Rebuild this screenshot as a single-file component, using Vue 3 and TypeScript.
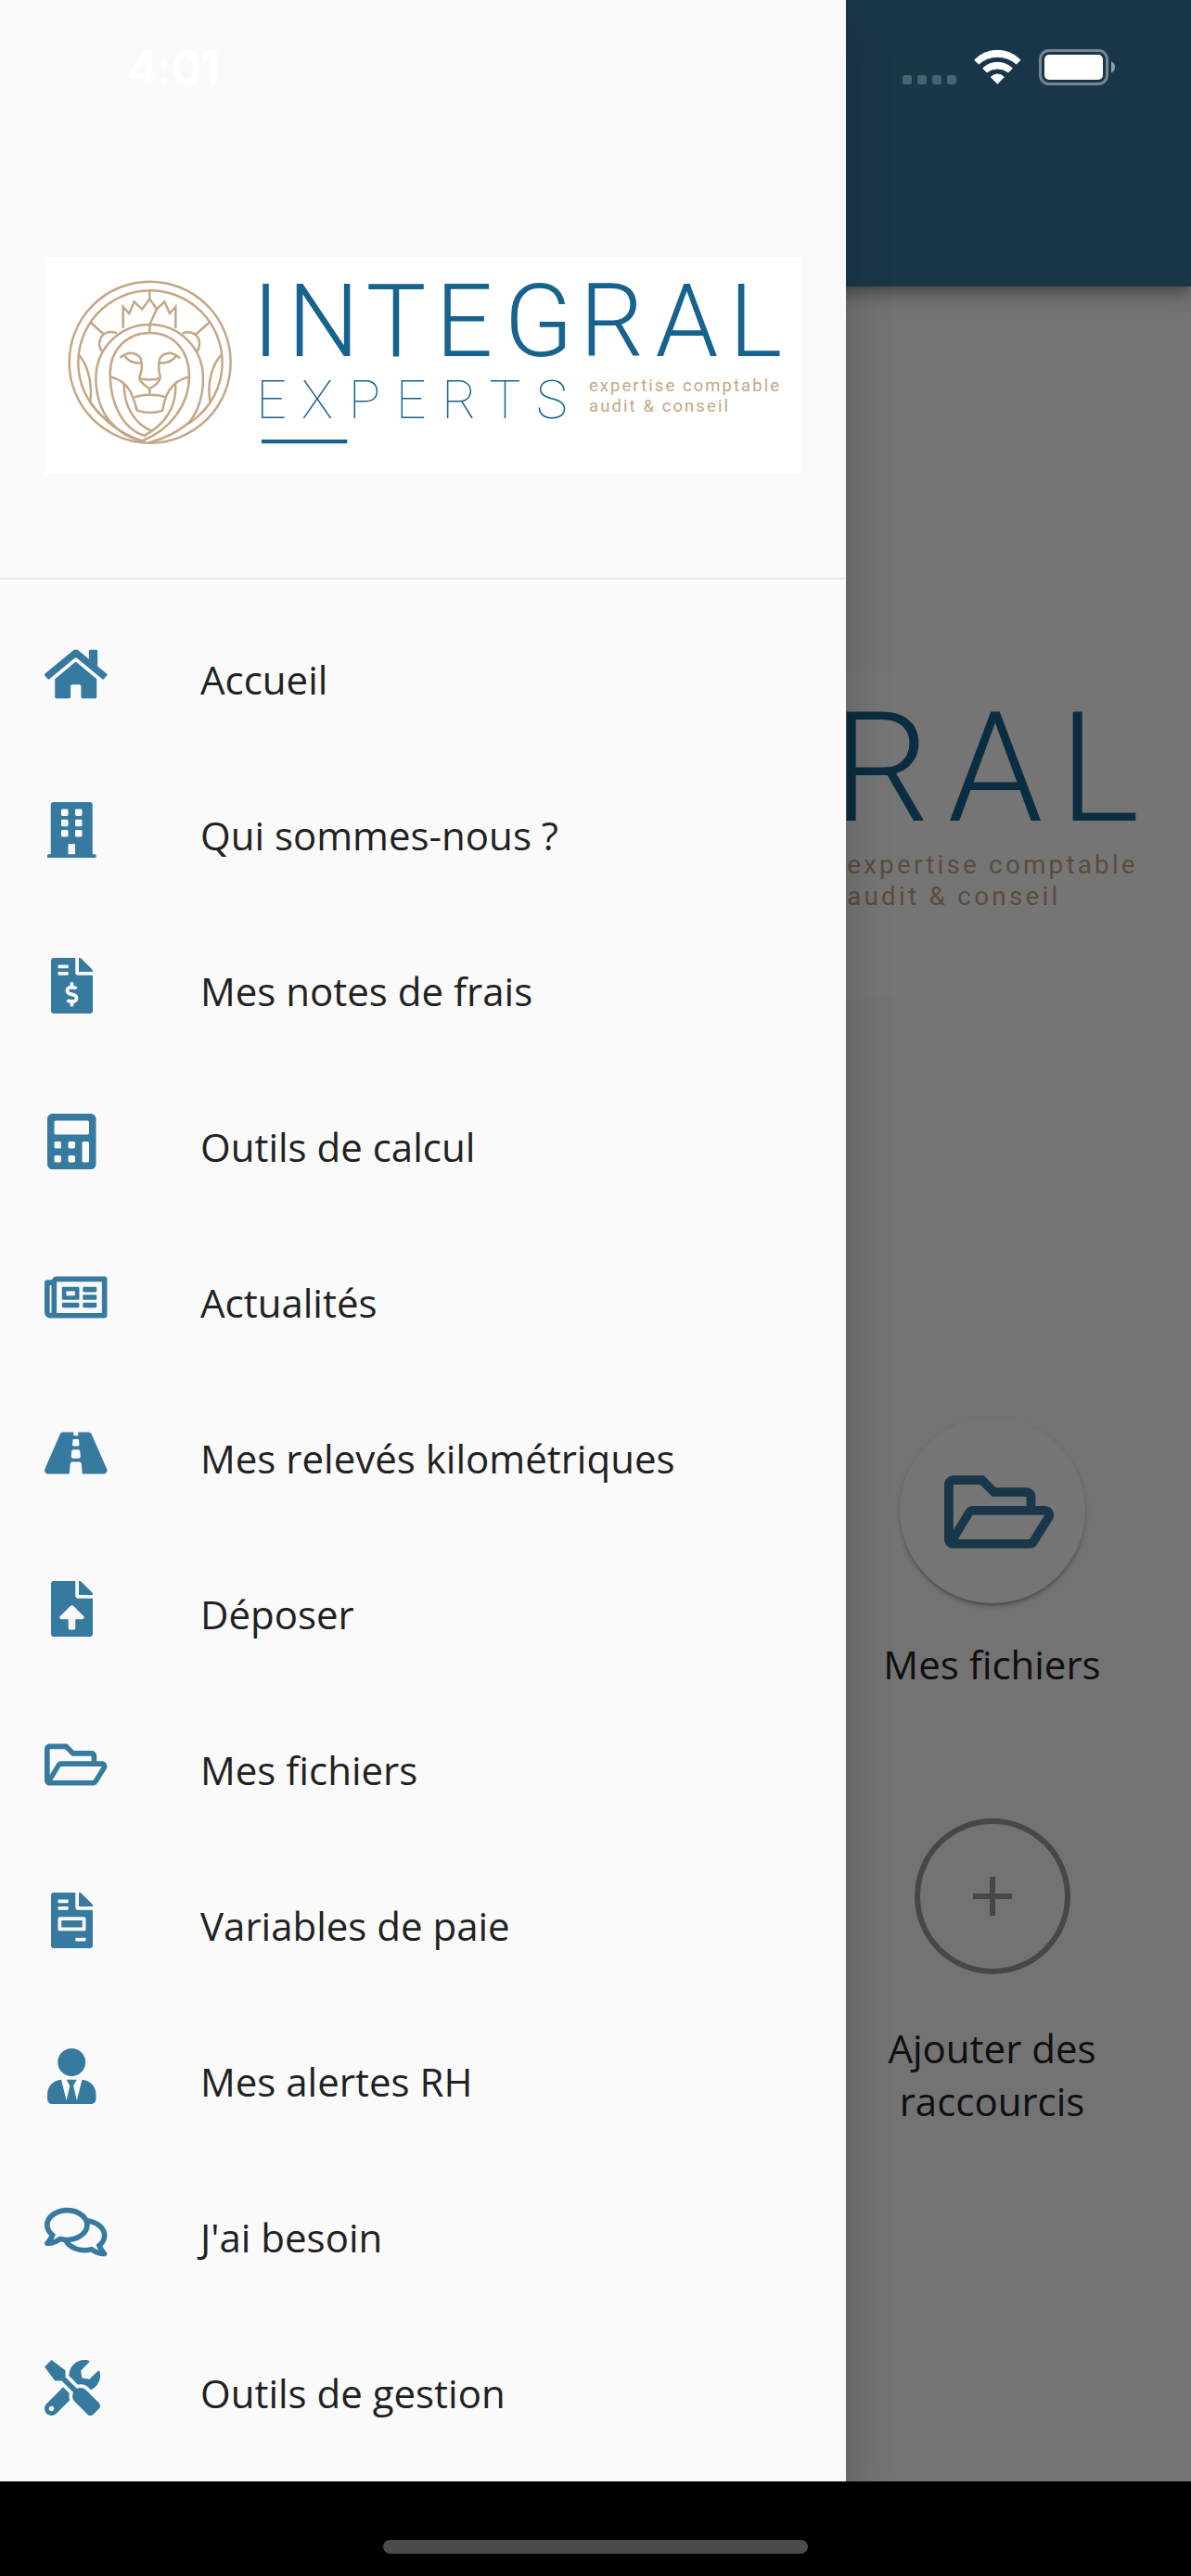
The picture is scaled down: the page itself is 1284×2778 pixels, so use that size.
<script setup lang="ts">
import { defineComponent, h } from 'vue'

interface MenuItem {
  label: string
  width: number
  path: string
}

const folderOpen =
  'M527.9 224H480v-48c0-26.5-21.5-48-48-48H272l-64-64H48C21.5 64 0 85.5 0 112v288c0 26.5 21.5 48 48 48h400c16.5 0 31.9-8.5 40.7-22.6l79.9-128c20-31.9-3-73.4-40.7-73.4zM48 118c0-3.3 2.7-6 6-6h134.1l64 64H426c3.3 0 6 2.7 6 6v42H152c-16.8 0-32.4 8.8-41.1 23.2L48 351.4zm400 282H72l77.2-128H528z'

const items: MenuItem[] = [
  {
    label: 'Accueil',
    width: 576,
    path: 'M280.37 148.26L96 300.11V464a16 16 0 0 0 16 16l112.06-.29a16 16 0 0 0 15.92-16V368a16 16 0 0 1 16-16h64a16 16 0 0 1 16 16v95.64a16 16 0 0 0 16 16.05L464 480a16 16 0 0 0 16-16V300L295.67 148.26a12.19 12.19 0 0 0-15.3 0zM571.6 251.47L488 182.56V44.05a12 12 0 0 0-12-12h-56a12 12 0 0 0-12 12v72.61L318.47 43a48 48 0 0 0-61 0L4.34 251.47a12 12 0 0 0-1.6 16.9l25.5 31A12 12 0 0 0 45.15 301l235.22-193.74a12.19 12.19 0 0 1 15.3 0L530.9 301a12 12 0 0 0 16.9-1.6l25.5-31a12 12 0 0 0-1.7-16.93z',
  },
  {
    label: 'Qui sommes-nous ?',
    width: 448,
    path: 'M436 480h-20V24c0-13.255-10.745-24-24-24H56C42.745 0 32 10.745 32 24v456H12c-6.627 0-12 5.373-12 12v20h448v-20c0-6.627-5.373-12-12-12zM128 76c0-6.627 5.373-12 12-12h40c6.627 0 12 5.373 12 12v40c0 6.627-5.373 12-12 12h-40c-6.627 0-12-5.373-12-12V76zm0 96c0-6.627 5.373-12 12-12h40c6.627 0 12 5.373 12 12v40c0 6.627-5.373 12-12 12h-40c-6.627 0-12-5.373-12-12v-40zm52 148h-40c-6.627 0-12-5.373-12-12v-40c0-6.627 5.373-12 12-12h40c6.627 0 12 5.373 12 12v40c0 6.627-5.373 12-12 12zm76 160h-64v-84c0-6.627 5.373-12 12-12h40c6.627 0 12 5.373 12 12v84zm64-172c0 6.627-5.373 12-12 12h-40c-6.627 0-12-5.373-12-12v-40c0-6.627 5.373-12 12-12h40c6.627 0 12 5.373 12 12v40zm0-96c0 6.627-5.373 12-12 12h-40c-6.627 0-12-5.373-12-12v-40c0-6.627 5.373-12 12-12h40c6.627 0 12 5.373 12 12v40zm0-96c0 6.627-5.373 12-12 12h-40c-6.627 0-12-5.373-12-12V76c0-6.627 5.373-12 12-12h40c6.627 0 12 5.373 12 12v40z',
  },
  {
    label: 'Mes notes de frais',
    width: 384,
    path: 'M377 105L279.1 7c-4.5-4.5-10.6-7-17-7H256v128h128v-6.1c0-6.3-2.5-12.4-7-16.9zm-153 31V0H24C10.7 0 0 10.7 0 24v464c0 13.3 10.7 24 24 24h336c13.3 0 24-10.7 24-24V160H248c-13.2 0-24-10.8-24-24zM64 72c0-4.42 3.58-8 8-8h80c4.42 0 8 3.58 8 8v16c0 4.42-3.58 8-8 8H72c-4.42 0-8-3.58-8-8V72zm0 80v-16c0-4.42 3.58-8 8-8h80c4.42 0 8 3.58 8 8v16c0 4.42-3.58 8-8 8H72c-4.42 0-8-3.58-8-8zm144 263.88V440c0 4.42-3.58 8-8 8h-16c-4.42 0-8-3.58-8-8v-24.29c-11.29-.58-22.27-4.52-31.37-11.35-3.9-2.93-4.1-8.77-.57-12.14l11.75-11.21c2.77-2.64 6.89-2.76 10.13-.73 3.87 2.42 8.26 3.72 12.82 3.72h28.11c6.5 0 11.8-5.92 11.8-13.19 0-5.95-3.61-11.19-8.77-12.73l-45-13.5c-18.59-5.58-31.58-23.42-31.58-43.39 0-24.52 19.05-44.44 42.67-45.07V232c0-4.42 3.58-8 8-8h16c4.42 0 8 3.58 8 8v24.29c11.29.58 22.27 4.51 31.37 11.35 3.9 2.93 4.1 8.77.57 12.14l-11.75 11.21c-2.77 2.64-6.89 2.76-10.13.73-3.87-2.43-8.26-3.72-12.82-3.72h-28.11c-6.5 0-11.8 5.92-11.8 13.19 0 5.95 3.61 11.19 8.77 12.73l45 13.5c18.59 5.58 31.58 23.42 31.58 43.39 0 24.53-19.05 44.44-42.67 45.07z',
  },
  {
    label: 'Outils de calcul',
    width: 448,
    path: 'M400 0H48C22.4 0 0 22.4 0 48v416c0 25.6 22.4 48 48 48h352c25.6 0 48-22.4 48-48V48c0-25.6-22.4-48-48-48zM128 435.2c0 6.4-6.4 12.8-12.8 12.8H76.8c-6.4 0-12.8-6.4-12.8-12.8v-38.4c0-6.4 6.4-12.8 12.8-12.8h38.4c6.4 0 12.8 6.4 12.8 12.8v38.4zm0-128c0 6.4-6.4 12.8-12.8 12.8H76.8c-6.4 0-12.8-6.4-12.8-12.8v-38.4c0-6.4 6.4-12.8 12.8-12.8h38.4c6.4 0 12.8 6.4 12.8 12.8v38.4zm128 128c0 6.4-6.4 12.8-12.8 12.8h-38.4c-6.4 0-12.8-6.4-12.8-12.8v-38.4c0-6.4 6.4-12.8 12.8-12.8h38.4c6.4 0 12.8 6.4 12.8 12.8v38.4zm0-128c0 6.4-6.4 12.8-12.8 12.8h-38.4c-6.4 0-12.8-6.4-12.8-12.8v-38.4c0-6.4 6.4-12.8 12.8-12.8h38.4c6.4 0 12.8 6.4 12.8 12.8v38.4zm128 128c0 6.4-6.4 12.8-12.8 12.8h-38.4c-6.4 0-12.8-6.4-12.8-12.8V268.8c0-6.4 6.4-12.8 12.8-12.8h38.4c6.4 0 12.8 6.4 12.8 12.8v166.4zm0-256c0 6.4-6.4 12.8-12.8 12.8H76.8c-6.4 0-12.8-6.4-12.8-12.8V76.8C64 70.4 70.4 64 76.8 64h294.4c6.4 0 12.8 6.4 12.8 12.8v102.4z',
  },
  {
    label: 'Actualités',
    width: 576,
    path: 'M552 64H112c-20.858 0-38.643 13.377-45.248 32H24c-13.255 0-24 10.745-24 24v272c0 30.928 25.072 56 56 56h496c13.255 0 24-10.745 24-24V88c0-13.255-10.745-24-24-24zM48 392V144h16v248c0 4.411-3.589 8-8 8s-8-3.589-8-8zm480 8H111.422c.374-2.614.578-5.283.578-8V112h416v288zM172 280h136c6.627 0 12-5.373 12-12v-96c0-6.627-5.373-12-12-12H172c-6.627 0-12 5.373-12 12v96c0 6.627 5.373 12 12 12zm28-80h80v40h-80v-40zm-40 140v-24c0-6.627 5.373-12 12-12h136c6.627 0 12 5.373 12 12v24c0 6.627-5.373 12-12 12H172c-6.627 0-12-5.373-12-12zm192 0v-24c0-6.627 5.373-12 12-12h104c6.627 0 12 5.373 12 12v24c0 6.627-5.373 12-12 12H364c-6.627 0-12-5.373-12-12zm0-144v-24c0-6.627 5.373-12 12-12h104c6.627 0 12 5.373 12 12v24c0 6.627-5.373 12-12 12H364c-6.627 0-12-5.373-12-12zm0 72v-24c0-6.627 5.373-12 12-12h104c6.627 0 12 5.373 12 12v24c0 6.627-5.373 12-12 12H364c-6.627 0-12-5.373-12-12z',
  },
  {
    label: 'Mes relevés kilométriques',
    width: 576,
    path: 'M573.19 402.67l-139.79-320C428.43 71.29 417.6 64 405.68 64h-97.59l2.45 23.16c.5 4.72-3.21 8.84-7.96 8.84h-29.16c-4.75 0-8.46-4.12-7.96-8.84L267.91 64h-97.59c-11.93 0-22.76 7.29-27.73 18.67L2.8 402.67C-6.45 423.86 8.31 448 30.54 448h196.84l10.31-97.68c.86-8.14 7.72-14.32 15.91-14.32h68.8c8.19 0 15.05 6.18 15.91 14.32L348.62 448h196.84c22.23 0 36.99-24.14 27.73-45.33zM260.4 135.16a8 8 0 0 1 7.96-7.16h39.29c4.09 0 7.53 3.09 7.96 7.16l4.6 43.58c.75 7.09-4.81 13.26-11.93 13.26h-40.54c-7.13 0-12.68-6.17-11.93-13.26l4.59-43.58zM315.64 304h-55.29c-9.5 0-16.91-8.23-15.91-17.68l5.07-48c.86-8.14 7.72-14.32 15.91-14.32h45.15c8.19 0 15.05 6.18 15.91 14.32l5.07 48c1 9.45-6.41 17.68-15.91 17.68z',
  },
  {
    label: 'Déposer',
    width: 384,
    path: 'M224 136V0H24C10.7 0 0 10.7 0 24v464c0 13.3 10.7 24 24 24h336c13.3 0 24-10.7 24-24V160H248c-13.2 0-24-10.8-24-24zm65.18 216.01H224v80c0 8.84-7.16 16-16 16h-32c-8.84 0-16-7.16-16-16v-80H94.82c-14.28 0-21.41-17.29-11.27-27.36l96.42-95.7c6.65-6.61 17.39-6.61 24.04 0l96.42 95.7c10.15 10.07 3.03 27.36-11.25 27.36zM377 105L279.1 7c-4.5-4.5-10.6-7-17-7H256v128h128v-6.1c0-6.3-2.5-12.4-7-16.9z',
  },
  { label: 'Mes fichiers', width: 576, path: folderOpen },
  {
    label: 'Variables de paie',
    width: 384,
    path: 'M288 256H96v64h192v-64zm89-151L279.1 7c-4.5-4.5-10.6-7-17-7H256v128h128v-6.1c0-6.3-2.5-12.4-7-16.9zm-153 31V0H24C10.7 0 0 10.7 0 24v464c0 13.3 10.7 24 24 24h336c13.3 0 24-10.7 24-24V160H248c-13.2 0-24-10.8-24-24zM64 72c0-4.42 3.58-8 8-8h80c4.42 0 8 3.58 8 8v16c0 4.42-3.58 8-8 8H72c-4.42 0-8-3.58-8-8V72zm0 64c0-4.42 3.58-8 8-8h80c4.42 0 8 3.58 8 8v16c0 4.42-3.58 8-8 8H72c-4.42 0-8-3.58-8-8v-16zm256 304c0 4.42-3.58 8-8 8h-80c-4.42 0-8-3.58-8-8v-16c0-4.42 3.58-8 8-8h80c4.42 0 8 3.58 8 8v16zm0-200v96c0 8.84-7.16 16-16 16H80c-8.84 0-16-7.16-16-16v-96c0-8.84 7.16-16 16-16h224c8.84 0 16 7.16 16 16z',
  },
  {
    label: 'Mes alertes RH',
    width: 448,
    path: 'M224 256c70.7 0 128-57.3 128-128S294.7 0 224 0 96 57.3 96 128s57.3 128 128 128zm95.8 32.6L272 480l-32-136 32-56h-96l32 56-32 136-47.8-191.4C56.9 292 0 350.3 0 422.4V464c0 26.5 21.5 48 48 48h352c26.5 0 48-21.5 48-48v-41.6c0-72.1-56.9-130.4-128.2-133.8z',
  },
  {
    label: "J'ai besoin",
    width: 576,
    path: 'M532 386.2c27.5-27.1 44-61.1 44-98.2 0-80-76.5-146.1-176.2-157.9C368.3 72.5 294.3 32 208 32 93.1 32 0 103.6 0 192c0 37 16.5 71 44 98.2-15.3 30.7-37.3 54.5-37.7 54.9-6.3 6.7-8.1 16.5-4.4 25 3.6 8.5 12 14 21.2 14 53.5 0 96.7-20.2 125.2-38.8 9.2 2.1 18.7 3.7 28.4 4.9C208.1 407.6 281.8 448 368 448c20.8 0 40.8-2.4 59.8-6.8C456.3 459.7 499.4 480 553 480c9.2 0 17.5-5.5 21.2-14 3.6-8.5 1.9-18.3-4.4-25-.4-.3-22.5-24.1-37.8-54.8zm-392.8-92.3L122.1 305c-14.1 9.1-28.5 16.3-43.1 21.4 2.7-4.7 5.4-9.7 8-14.8l15.5-31.1L77.7 256C64.2 242.6 48 220.7 48 192c0-60.7 73.3-112 160-112s160 51.3 160 112-73.3 112-160 112c-16.5 0-33-1.9-49-5.6l-19.8-4.5zM498.3 352l-24.7 24.4 15.5 31.1c2.6 5.1 5.3 10.1 8 14.8-14.6-5.1-29-12.3-43.1-21.4l-17.1-11.1-19.9 4.6c-16 3.7-32.5 5.6-49 5.6-54 0-102.2-20.1-131.3-49.7C338 339.5 416 272.9 416 192c0-3.4-.4-6.7-.7-10C479.7 196.5 528 238.8 528 288c0 28.7-16.2 50.6-29.7 64z',
  },
  {
    label: 'Outils de gestion',
    width: 512,
    path: 'M501.1 395.7L384 278.6c-23.1-23.1-57.6-27.6-85.4-13.9L192 158.1V96L64 0 0 64l96 128h62.1l106.6 106.6c-13.6 27.8-9.2 62.3 13.9 85.4l117.1 117.1c14.6 14.6 38.2 14.6 52.7 0l52.7-52.7c14.5-14.6 14.5-38.2 0-52.7zM331.7 225c28.3 0 54.9 11 74.9 31l19.4 19.4c15.8-6.9 30.8-16.5 43.8-29.5 37.1-37.1 49.7-89.3 37.9-136.7-2.2-9-13.5-12.1-20.1-5.5l-74.4 74.4-67.9-11.3L334 98.9l74.4-74.4c6.6-6.6 3.4-17.9-5.7-20.2-47.4-11.7-99.6.9-136.6 37.9-28.5 28.5-41.9 66.1-41.2 103.6l82.1 82.1c8.1-1.9 16.5-2.9 24.7-2.9zm-103.9 82l-56.7-56.7L18.7 402.8c-25 25-25 65.5 0 90.5s65.5 25 90.5 0l123.6-123.6c-7.6-19.9-9.9-41.6-5-62.7zM64 472c-13.2 0-24-10.8-24-24 0-13.3 10.7-24 24-24s24 10.7 24 24c0 13.2-10.7 24-24 24z',
  },
]

// Line work of the lion medallion, drawn at three times the logo's scale.
const lion = [
  'M230 552A233 233 0 1 1 490 560',
  'M364 130V157M387 190L364 240V267',
  'M278 252V183L298 204L314 166L339 191L364 157L387 190L412 166L429 204L448 183V252',
  'M174 234L214 270M556 234L513 272',
  'M258 268C235 260 215 265 205 285C198 305 202 315 210 327',
  'M470 268C495 260 512 267 522 285C528 300 524 315 518 327',
  'M135 338C170 380 178 440 172 492M595 338C560 380 550 440 560 492',
  'M364 240C270 240 190 315 190 415C190 470 208 522 236 553',
  'M364 240C460 240 537 315 537 415C537 470 520 525 490 558C450 592 400 612 362 622',
  'M172 490C215 555 280 600 350 620',
  'M236 553C265 588 305 610 345 618',
  'M364 267C290 267 236 322 236 400C236 500 280 582 352 601',
  'M364 267C440 267 492 322 492 408C492 500 430 580 340 616',
  'M236 409C300 425 312 475 323 518C350 527 382 527 406 518C413 470 430 425 492 409',
  'M281 435C281 500 312 562 372 585M448 435C450 505 420 560 346 600',
  'M315 475C340 466 385 464 416 475M364 447V467',
  'M330 413C345 420 385 420 399 413M330 413C336 432 352 440 364 447C377 440 393 432 399 413',
  'M268 347C285 335 298 331 310 333C328 337 338 347 338 365C342 388 335 396 330 413',
  'M284 342C296 361 315 366 338 364',
  'M462 349C446 335 433 331 422 333C404 337 394 348 394 365C392 388 395 400 399 413',
  'M449 342C437 361 420 366 394 364',
]

const word = (text: string, x: string, y: number, size: number, weight: number) =>
  h('text', { x, y, 'font-size': size, 'font-weight': weight, fill: '#17638f' }, text)

const tagline = (text: string, y: number, length: number) =>
  h('text', { x: 587, y, 'font-size': 18.4, fill: '#c5a685', textLength: length }, text)

const BrandLogo = defineComponent({
  render() {
    return h(
      'svg',
      {
        viewBox: '0 0 816 233',
        preserveAspectRatio: 'none',
        'font-family': 'Roboto, sans-serif',
      },
      [
        h('rect', { width: 816, height: 233, fill: '#fff' }),
        h(
          'g',
          {
            transform: 'translate(-8 -8) scale(.33333)',
            fill: 'none',
            stroke: '#c5a685',
            'stroke-width': 7.5,
          },
          [h('circle', { cx: 365, cy: 362, r: 261 }), ...lion.map((d) => h('path', { d }))],
        ),
        word('INTEGRAL', '224 262 346.5 421.5 495.5 577 658.5 738', 106, 108.7, 300),
        word('EXPERTS', '228.5 277 328 379 428.5 479.5 530', 172.6, 56.8, 100),
        h('rect', { x: 234, y: 196, width: 92.3, height: 4.2, fill: '#17638f' }),
        tagline('expertise comptable', 144.2, 205),
        tagline('audit & conseil', 166.2, 150),
      ],
    )
  },
})
</script>

<template>
  <div class="screen">
    <div class="home">
      <header class="app-bar"></header>
      <main class="content">
        <BrandLogo class="hero" />
        <div class="shortcuts">
          <div class="shortcut">
            <div class="disc">
              <svg class="disc-icon" viewBox="0 0 576 512"><path :d="folderOpen" /></svg>
            </div>
            <span class="caption">Mes fichiers</span>
          </div>
          <div class="shortcut add">
            <div class="ring">
              <svg viewBox="0 0 42 42"><path d="M18 0h6v18h18v6H24v18h-6V24H0v-6h18z" /></svg>
            </div>
            <span class="caption">Ajouter des raccourcis</span>
          </div>
        </div>
      </main>
      <div class="scrim"></div>
    </div>

    <aside class="drawer">
      <div class="drawer-head">
        <BrandLogo class="brand" />
      </div>
      <nav class="menu">
        <a v-for="item in items" :key="item.label" class="row">
          <span class="icon-box">
            <svg
              class="icon"
              :viewBox="`0 0 ${item.width} 512`"
              :style="{ width: `${(item.width * 60) / 512}px` }"
            >
              <path :d="item.path" fill-rule="evenodd" />
            </svg>
          </span>
          <span class="label">{{ item.label }}</span>
        </a>
      </nav>
    </aside>

    <div class="status">
      <span class="clock">4:01</span>
      <svg class="indicators" viewBox="0 0 780 210">
        <g fill="#fff" fill-opacity=".22">
          <rect x="39" y="123" width="30" height="30" rx="8" />
          <rect x="87" y="123" width="30" height="30" rx="8" />
          <rect x="135" y="123" width="30" height="30" rx="8" />
          <rect x="183" y="123" width="30" height="30" rx="8" />
        </g>
        <g fill="#fff" stroke="#fff" stroke-width="3" stroke-linejoin="round">
          <path d="M272 74Q303 43 346 43T420 74L407 87Q381 64 346 64T286 87Z" />
          <path d="M299 101Q319 82 346 82T394 101L381 114Q367 102 346 102T312 114Z" />
          <path d="M325 129Q334 120 346 120T367 129L346 151Z" />
        </g>
        <rect x="484.5" y="43.5" width="216" height="108" rx="28" fill="none" stroke="#fff" stroke-opacity=".4" stroke-width="9" />
        <rect x="498" y="57" width="189" height="81" rx="15" fill="#fff" />
        <path d="M714 78Q726 84 726 97T714 116Z" fill="#fff" fill-opacity=".5" />
      </svg>
    </div>

    <footer class="gesture-area"><span class="gesture-bar"></span></footer>
  </div>
</template>

<style>
body {
  margin: 0;
  background: #000;
}
</style>

<style scoped>
.screen {
  position: relative;
  display: flex;
  flex-direction: column;
  width: 1284px;
  height: 2778px;
  overflow: hidden;
  background: #000;
  font-family: 'Open Sans', sans-serif;
  font-size: 42px;
  line-height: 57px;
  color: #212121;
}
.home {
  position: relative;
  display: flex;
  flex-direction: column;
  height: 2676px;
  overflow: hidden;
  background: #fafafa;
}
.app-bar {
  flex: none;
  height: 309px;
  background: #3a799f;
  box-shadow:
    0 6px 12px -3px rgba(0, 0, 0, 0.2),
    0 12px 15px rgba(0, 0, 0, 0.14),
    0 3px 30px rgba(0, 0, 0, 0.12);
}
.content {
  display: flex;
  flex-direction: column;
  padding: 415px 24px 0;
}
.hero {
  width: 1236px;
  height: 353px;
}
.shortcuts {
  display: flex;
  flex-direction: column;
  align-items: center;
  align-self: flex-end;
  width: 381px;
  margin-top: 452px;
}
.shortcut {
  display: flex;
  flex-direction: column;
  align-items: center;
  width: 260px;
  text-align: center;
}
.disc {
  display: flex;
  align-items: center;
  box-sizing: border-box;
  width: 200px;
  height: 200px;
  padding: 3px 0 0 48px;
  border-radius: 50%;
  background: #fff;
  box-shadow:
    0 4px 3px -2px rgba(0, 0, 0, 0.2),
    0 3px 4px rgba(0, 0, 0, 0.14),
    0 3px 6px rgba(0, 0, 0, 0.08);
}
.disc-icon {
  flex: none;
  width: 118.1px;
  height: 105px;
  fill: #3a799f;
}
.disc + .caption {
  margin-top: 37px;
}
.add {
  margin-top: 138px;
}
.ring {
  display: flex;
  align-items: center;
  justify-content: center;
  box-sizing: border-box;
  width: 168px;
  height: 168px;
  border: 6px solid #9c9c9c;
  border-radius: 50%;
}
.ring svg {
  width: 42px;
  height: 42px;
  fill: #9c9c9c;
}
.ring + .caption {
  margin-top: 51px;
}
.scrim {
  position: absolute;
  inset: 0;
  background: rgba(0, 0, 0, 0.54);
}
.drawer {
  position: absolute;
  top: 0;
  left: 0;
  display: flex;
  flex-direction: column;
  width: 912px;
  height: 2676px;
  background: #fafafa;
  box-shadow: 0 24px 48px rgba(0, 0, 0, 0.2);
}
.drawer-head {
  flex: none;
  display: flex;
  box-sizing: border-box;
  height: 625px;
  padding: 278px 48px 0;
  border-bottom: 2px solid #e9e9e9;
}
.brand {
  width: 816px;
  height: 233px;
}
.menu {
  display: flex;
  flex-direction: column;
  padding-top: 24px;
}
.row {
  display: flex;
  align-items: center;
  height: 168px;
  padding-left: 48px;
}
.icon-box {
  display: flex;
  align-items: center;
  justify-content: safe center;
  width: 59px;
  height: 60px;
  margin: 0 109px 12px 0;
}
.icon {
  flex: none;
  height: 60px;
  fill: #377aa0;
}
.label {
  margin-bottom: 1px;
  white-space: nowrap;
}
.status {
  position: absolute;
  top: 40px;
  left: 0;
  display: flex;
  justify-content: space-between;
  width: 1220px;
  height: 70px;
}
.clock {
  padding-left: 137px;
  font: 600 50px/66px Inter, sans-serif;
  letter-spacing: -1px;
  color: #fff;
}
.indicators {
  width: 260px;
  height: 70px;
}
.gesture-area {
  position: relative;
  display: flex;
  justify-content: center;
  height: 102px;
  background: #000;
}
.gesture-bar {
  width: 458px;
  height: 15px;
  margin-top: 63px;
  border-radius: 8px;
  background: #4b4b4b;
}
</style>
